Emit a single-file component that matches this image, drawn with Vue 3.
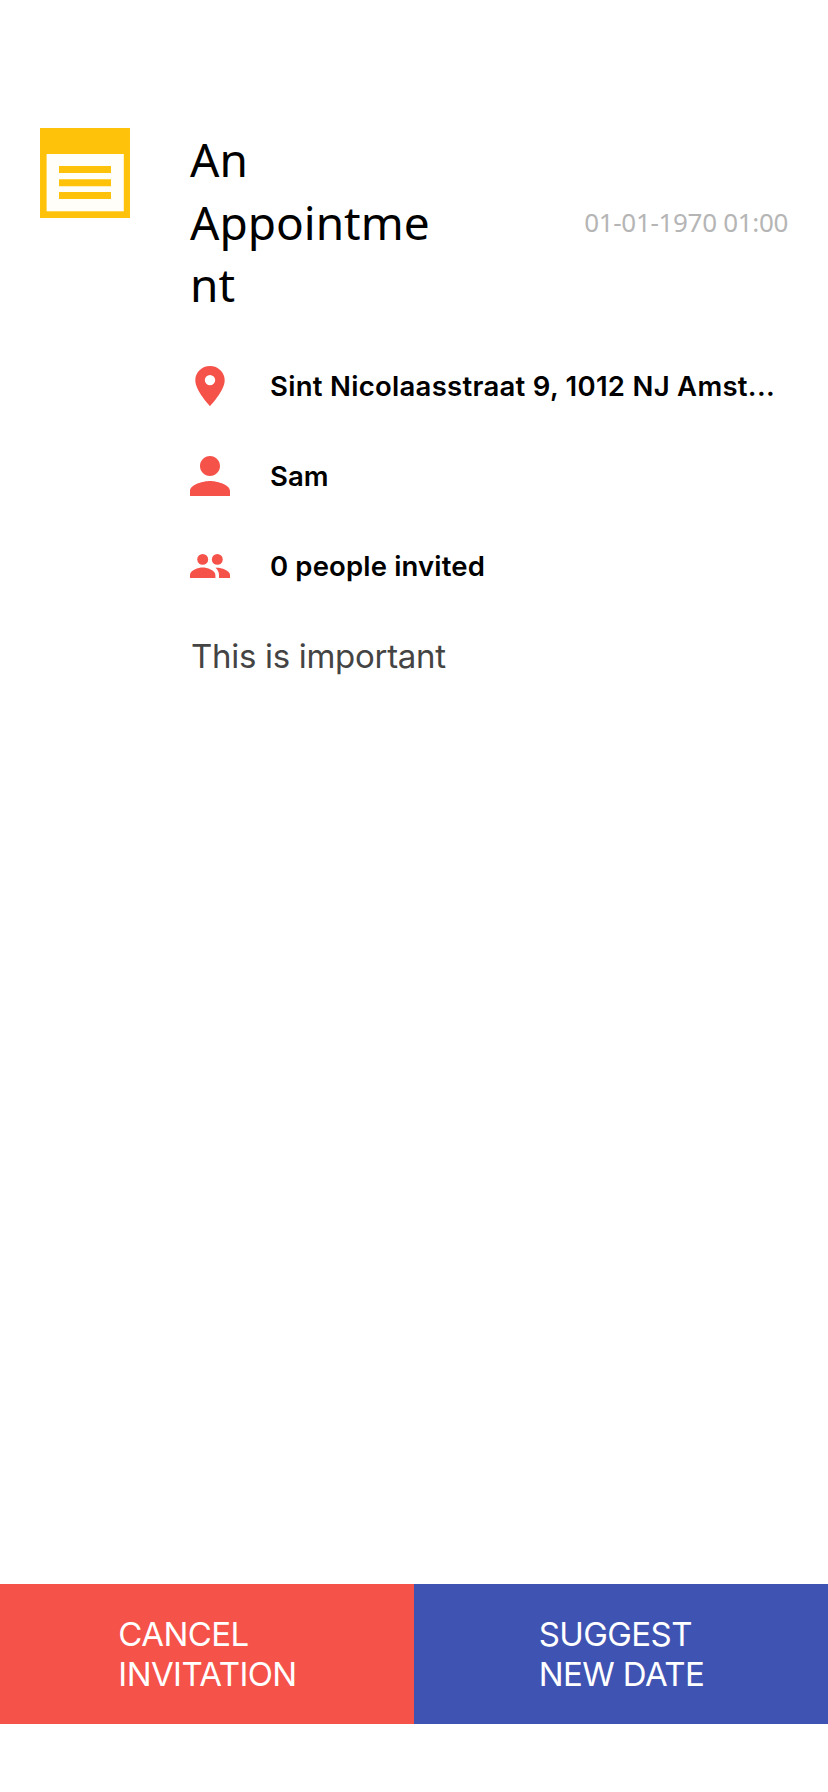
<script setup>
const appointment = {
  title: 'An Appointment',
  date: '01-01-1970 01:00',
  note: 'This is important',
}
</script>

<template>
  <main class="screen">
    <section class="details">
      <svg class="calendar" viewBox="0 0 90 90">
        <rect width="90" height="90" fill="#ffc20a" />
        <rect x="6.6" y="26" width="77.2" height="57.3" fill="#fffef8" />
        <path d="M19 38h52v7H19zM19 51.2h52v7H19zM19 64h52v7H19z" fill="#ffc20a" />
      </svg>
      <div class="content">
        <header class="heading">
          <h1>{{ appointment.title }}</h1>
          <time>{{ appointment.date }}</time>
        </header>
        <ul class="facts">
          <li>
            <svg class="icon" viewBox="0 0 40 40">
              <path fill-rule="evenodd" d="M20 0C11.8 0 5.3 6.3 5.3 14.2C5.3 24.8 20 40 20 40S34.7 24.8 34.7 14.2C34.7 6.3 28.2 0 20 0ZM20 8.9a5.2 5.2 0 1 1 0 10.4a5.2 5.2 0 1 1 0-10.4Z" />
            </svg>
            <span class="address">Sint Nicolaasstraat 9, 1012 NJ Amst...</span>
          </li>
          <li>
            <svg class="icon" viewBox="4 4 16 16">
              <path d="M12 12c2.21 0 4-1.79 4-4s-1.79-4-4-4-4 1.79-4 4 1.79 4 4 4zm0 2c-2.67 0-8 1.34-8 4v2h16v-2c0-2.66-5.33-4-8-4z" />
            </svg>
            <span class="person">Sam</span>
          </li>
          <li>
            <svg class="icon" viewBox="0 0 40 40">
              <circle cx="12.7" cy="13.4" r="5.45" />
              <circle cx="27.3" cy="13.4" r="5.45" />
              <path d="M0 32v-3.1C0 24.2 8.5 21.6 12.7 21.6S25.4 24.2 25.4 28.9V32zM29 32v-3.1c0-3-1.4-5.2-3.5-7.2C30 21.2 40 23.9 40 28.9V32z" />
            </svg>
            <span class="invited">0 people invited</span>
          </li>
        </ul>
        <p class="note">{{ appointment.note }}</p>
      </div>
    </section>
    <footer class="actions">
      <button class="cancel"><span>CANCEL<br />INVITATION</span></button>
      <button class="suggest"><span>SUGGEST<br />NEW DATE</span></button>
    </footer>
  </main>
</template>

<style>
body {
  margin: 0;
  background: #fff;
}
</style>

<style scoped>
.screen {
  box-sizing: border-box;
  display: flex;
  flex-direction: column;
  justify-content: space-between;
  height: 1792px;
  padding: 128px 0 68px;
  background: #fff;
  font-family: Inter, "Liberation Sans", sans-serif;
  color: #000;
}
.details {
  display: flex;
  gap: 60px;
  padding: 0 40px;
}
.calendar {
  flex: none;
  width: 90px;
  height: 90px;
}
.content {
  flex: 1;
  min-width: 0;
}
.heading {
  display: flex;
  align-items: center;
  justify-content: space-between;
  font-family: "Noto Sans", sans-serif;
}
h1 {
  width: 250px;
  margin: 0;
  font-size: 46px;
  font-weight: 400;
  line-height: 62.67px;
  overflow-wrap: anywhere;
}
time {
  font-size: 26px;
  letter-spacing: -0.32px;
  color: #b5b5b5;
  white-space: nowrap;
}
.facts {
  display: grid;
  gap: 50px;
  margin: 50px 0 0;
  padding: 0;
  list-style: none;
}
.facts li {
  display: flex;
  align-items: center;
  gap: 40px;
  height: 40px;
  font-size: 27.5px;
  font-weight: 600;
  line-height: 40px;
  white-space: nowrap;
}
.address {
  letter-spacing: 0.29px;
}
.invited {
  letter-spacing: 0.15px;
}
.icon {
  flex: none;
  width: 40px;
  height: 40px;
  fill: #f5524a;
}
.note {
  margin: 50px 0 0;
  padding-left: 1px;
  font-size: 33px;
  line-height: 40px;
  letter-spacing: -0.3px;
  color: #444;
}
.actions {
  display: grid;
  grid-template-columns: 1fr 1fr;
  height: 140px;
}
button {
  display: flex;
  align-items: center;
  justify-content: center;
  padding: 0 0 0 1px;
  border: 0;
  font: 400 33px/40px Inter, "Liberation Sans", sans-serif;
  letter-spacing: -0.58px;
  color: #fff;
  text-align: left;
}
.cancel {
  background: #f5524a;
}
.suggest {
  background: #3f53b3;
}
</style>
